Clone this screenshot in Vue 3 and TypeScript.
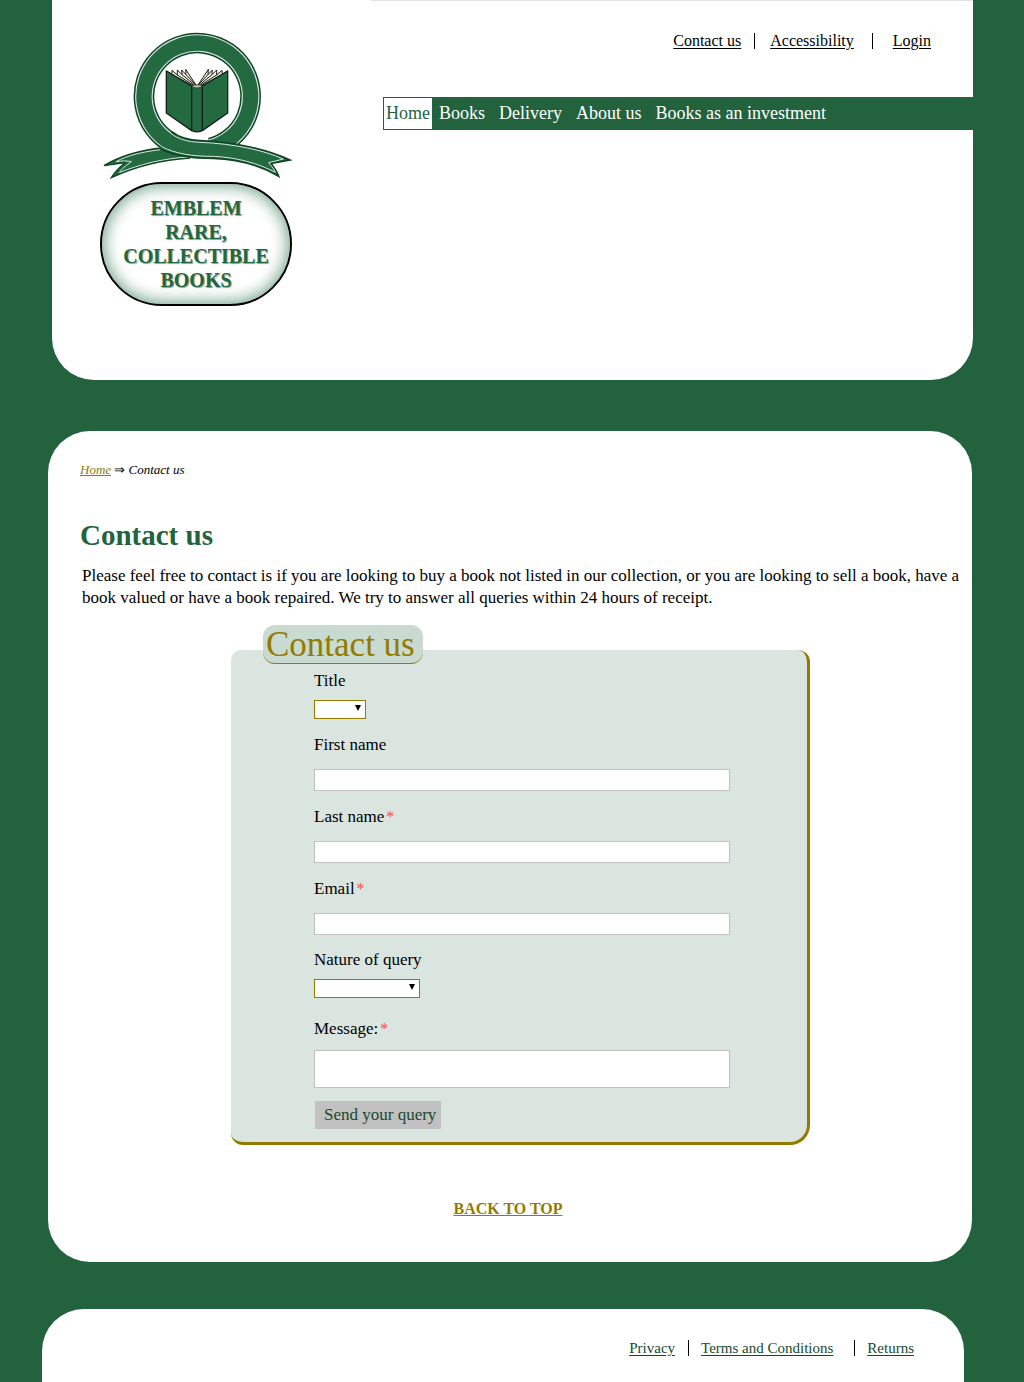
<script setup lang="ts">
import { ref } from 'vue'

interface NavLink {
  label: string
  current?: boolean
}

const topLinks: string[] = ['Contact us', 'Accessibility', 'Login']
const footerLinks: string[] = ['Privacy', 'Terms and Conditions', 'Returns']
const navLinks: NavLink[] = [
  { label: 'Home', current: true },
  { label: 'Books' },
  { label: 'Delivery' },
  { label: 'About us' },
  { label: 'Books as an investment' },
]

const title = ref('')
const firstName = ref('')
const lastName = ref('')
const email = ref('')
const nature = ref('')
const message = ref('')
</script>

<template>
  <div id="top" class="page">
    <header class="site-header">
      <a class="brand" href="#">
        <svg class="emblem" viewBox="30 30 576 450" aria-hidden="true">
          <!-- left tail -->
          <path class="ribbon" d="M214 384 C150 391 90 408 42 437 L106 428 C84 444 74 456 64 473 C130 442 210 420 300 414 Z" />
          <path class="ribbon-line" d="M212 389 C160 395 112 406 78 425 C96 422 112 422 124 425 C106 438 96 446 88 458 C150 433 220 415 296 411" />
          <!-- ribbon loop, open where the front band crosses it -->
          <g fill="none">
            <path d="M246 370 A160 160 0 1 1 362 384" stroke="#0f4526" stroke-width="62" />
            <path d="M246 370 A160 160 0 1 1 362 384" stroke="#d5e4da" stroke-width="53" />
            <path d="M246 370 A160 160 0 1 1 362 384" stroke="#236a40" stroke-width="46" />
          </g>
          <!-- front band running into the right tail -->
          <path class="band" d="M246 336 C270 354 295 361 330 362 C430 365 530 388 600 420 L543 430 C551 442 561 454 566 469 C510 436 440 417 370 415 C305 415 255 408 210 386 Z" />
          <path class="ribbon-edge" d="M245 335 C270 354 295 361 330 362 C430 365 530 388 600 420 L543 430 C551 442 561 454 566 469 C510 436 440 417 370 415 C305 415 255 408 211 386" />
          <path class="ribbon-line" d="M242 340 C266 358 295 366 330 367 C430 371 520 390 580 417 C566 421 550 424 536 428 C546 440 552 448 556 457 C505 430 440 412 370 409 C308 409 258 402 215 380" />
          <!-- open book -->
          <g stroke="#17211b" stroke-linejoin="round">
            <path d="M229 153 L245 163 L246 151 L262 165 L262 150 L276 164 L275 150 L288 164 L287 148 L318 195 L305 199 Z" fill="#efeddc" stroke-width="3" />
            <path d="M413 153 L397 163 L396 151 L380 165 L380 150 L366 164 L367 150 L354 164 L355 148 L324 195 L337 199 Z" fill="#efeddc" stroke-width="3" />
            <path d="M245 163 L308 197 M262 165 L311 196 M276 164 L314 195 M288 164 L316 193 M397 163 L334 197 M380 165 L331 196 M366 164 L328 195 M354 164 L326 193" fill="none" stroke-width="3" />
            <path d="M229 153 L305 198 V332 L229 279 Z M413 153 L337 198 V332 L413 279 Z" fill="#236a40" stroke-width="4" />
            <path d="M305 199 H337 V331 Q321 340 305 331 Z" fill="#236a40" stroke-width="4" />
            <ellipse cx="321" cy="199" rx="14" ry="5" fill="#b9b8a6" stroke-width="2" />
          </g>
        </svg>
        <span class="brand-name">EMBLEM<br />RARE,<br />COLLECTIBLE<br />BOOKS</span>
      </a>
      <div class="header-side">
        <ul class="top-links">
          <li v-for="link in topLinks" :key="link"><a href="#">{{ link }}</a></li>
        </ul>
        <nav class="main-nav" aria-label="Main">
          <a
            v-for="link in navLinks"
            :key="link.label"
            href="#"
            :class="{ current: link.current }"
          >{{ link.label }}</a>
        </nav>
      </div>
    </header>

    <main class="content">
      <p class="crumbs"><a href="#">Home</a> <span class="arrow">⇒</span> Contact us</p>
      <h1>Contact us</h1>
      <p class="intro">
        Please feel free to contact is if you are looking to buy a book not listed in our collection, or you are looking to sell a book, have a book valued or have a book repaired. We try to answer all queries within 24 hours of receipt.
      </p>

      <form class="panel" @submit.prevent>
        <h2>Contact us</h2>
        <div class="fields">
          <div class="field choice">
            <label for="title">Title</label>
            <span class="select short">
              <select id="title" v-model="title">
                <option value=""></option>
                <option>Mr</option>
                <option>Mrs</option>
                <option>Ms</option>
              </select>
            </span>
          </div>
          <div class="field">
            <label for="first-name">First name</label>
            <input id="first-name" v-model="firstName" type="text" />
          </div>
          <div class="field">
            <label for="last-name">Last name<span class="required">*</span></label>
            <input id="last-name" v-model="lastName" type="text" required />
          </div>
          <div class="field">
            <label for="email">Email<span class="required">*</span></label>
            <input id="email" v-model="email" type="email" required />
          </div>
          <div class="field choice">
            <label for="nature">Nature of query</label>
            <span class="select">
              <select id="nature" v-model="nature">
                <option value=""></option>
                <option>Buying</option>
                <option>Selling</option>
                <option>Repair</option>
              </select>
            </span>
          </div>
          <div class="field message">
            <label for="message">Message:<span class="required">*</span></label>
            <textarea id="message" v-model="message" required></textarea>
          </div>
          <button type="submit">Send your query</button>
        </div>
      </form>

      <p class="back"><a href="#top">BACK TO TOP</a></p>
    </main>

    <footer class="site-footer">
      <ul class="footer-links">
        <li v-for="link in footerLinks" :key="link"><a href="#">{{ link }}</a></li>
      </ul>
    </footer>
  </div>
</template>

<style>
html,
body {
  margin: 0;
  background: #22633d;
}
</style>

<style scoped>
.page {
  display: flex;
  flex-direction: column;
  min-height: 100vh;
  background: #22633d;
  color: #000;
  font-family: "Liberation Serif", "Times New Roman", serif;
}

.site-header {
  display: flex;
  align-items: flex-start;
  box-sizing: border-box;
  min-height: 380px;
  margin: 0 51px 0 52px;
  background: #fff;
  border-radius: 0 0 42px 42px;
}

.brand {
  display: flex;
  flex: none;
  flex-direction: column;
  gap: 2px;
  width: 192px;
  padding: 30px 79px 0 48px;
  text-decoration: none;
}

.emblem {
  display: block;
  width: 192px;
  height: 150px;
}

.ribbon {
  fill: #236a40;
  stroke: #0f4526;
  stroke-width: 4;
}

.band {
  fill: #236a40;
}

.ribbon-edge {
  fill: none;
  stroke: #0f4526;
  stroke-width: 5;
}

.ribbon-line {
  fill: none;
  stroke: #d5e4da;
  stroke-width: 3;
}

.brand-name {
  box-sizing: border-box;
  height: 124px;
  padding-top: 12px;
  border: 2px solid #000;
  border-radius: 62px;
  box-shadow: inset 0 0 16px 2px #6fa185;
  color: #22683f;
  font-size: 20px;
  font-weight: bold;
  line-height: 24px;
  text-align: center;
  text-shadow: 1px 1px 1px #8a9a90;
}

.header-side {
  flex: 1;
  border-top: 1px solid #e2e2e2;
}

.top-links,
.footer-links {
  display: flex;
  justify-content: flex-end;
  margin: 0;
  padding: 0;
  list-style: none;
}

.top-links {
  padding: 32px 42px 0 0;
  font-size: 16px;
  line-height: 16px;
}

.top-links li + li,
.footer-links li + li {
  margin-left: 13px;
  padding-left: 15px;
  border-left: 1px solid #000;
}

.top-links li:last-child {
  margin-left: 18px;
  padding-left: 20px;
}

.top-links a {
  color: #000;
  text-underline-offset: 2px;
}

.main-nav {
  display: flex;
  gap: 14px;
  margin: 48px 0 0 12px;
  border: 1px solid #22633d;
  border-right: 0;
  background: #22633d;
  font-size: 18px;
  line-height: 31px;
}

.main-nav a {
  color: #fff;
  text-decoration: none;
}

.main-nav a.current {
  margin-right: -7px;
  padding: 0 2px;
  background: #fff;
  color: #22633d;
}

.content {
  margin: 51px 52px 0 48px;
  padding: 31px 32px 43px;
  background: #fff;
  border-radius: 42px;
}

.crumbs {
  margin: 0;
  font-size: 13px;
  font-style: italic;
  line-height: 16px;
}

.arrow {
  font-style: normal;
}

.crumbs a,
.back a {
  color: #937b00;
}

h1 {
  margin: 41px 0 0;
  color: #22633d;
  font-size: 29px;
  line-height: 32px;
}

.intro {
  margin: 14px -24px 0 2px;
  font-size: 17px;
  line-height: 22px;
}

.panel {
  box-sizing: border-box;
  max-width: 579px;
  margin: 41px 0 0 151px;
  padding: 0 77px 13px 83px;
  background: #dbe5df;
  border-right: 3px solid #937b00;
  border-bottom: 3px solid #937b00;
  border-radius: 10px 12px 20px 12px;
}

h2 {
  display: inline-block;
  box-sizing: border-box;
  width: 160px;
  margin: -25px 0 0 -51px;
  padding: 2px 0 0 3px;
  border-bottom: 1px solid #937b00;
  border-radius: 12px;
  background: #c9dad1;
  color: #937b00;
  font-size: 35px;
  font-weight: normal;
  line-height: 36px;
  vertical-align: top;
}

.fields {
  display: flex;
  flex-direction: column;
  align-items: flex-start;
  gap: 16px;
  padding-top: 4px;
  font-size: 17px;
  line-height: 20px;
}

.field {
  display: flex;
  flex-direction: column;
  align-items: flex-start;
  gap: 14px;
  width: 100%;
}

.field.choice {
  gap: 9px;
  margin-top: -1px;
}

.field.message {
  gap: 11px;
  margin-top: 5px;
}

.required {
  margin-left: 2px;
  color: #ff4a3d;
  font-size: 16px;
}

input,
textarea {
  box-sizing: border-box;
  width: 100%;
  margin: 0;
  border: 1px solid #c2c2c2;
  border-radius: 0;
  background: #fff;
  font: inherit;
}

input {
  height: 22px;
}

textarea {
  height: 38px;
  resize: none;
}

.select {
  display: flex;
  position: relative;
  width: 106px;
}

.select.short {
  width: 52px;
}

.select::after {
  position: absolute;
  top: 5px;
  right: 5px;
  border: 3px solid transparent;
  border-top: 6px solid #000;
  border-bottom: 0;
  content: "";
  pointer-events: none;
}

select {
  width: 100%;
  height: 19px;
  margin: 0;
  border: 1px solid #937b00;
  border-radius: 0;
  background: #fff;
  appearance: none;
}

button {
  height: 28px;
  margin: -3px 0 0 1px;
  padding: 0 5px 0 9px;
  border: 0;
  background: #c1c1c1;
  color: #164a2b;
  font: inherit;
}

.back {
  margin: 54px 4px 0 0;
  font-size: 16px;
  font-weight: bold;
  line-height: 20px;
  text-align: center;
}

.site-footer {
  flex: 1;
  margin: 47px 60px 0 42px;
  padding: 31px 50px 24px;
  background: #fff;
  border-radius: 42px 42px 0 0;
}

.footer-links {
  font-size: 15px;
  line-height: 16px;
}

.footer-links li + li {
  padding-left: 12px;
}

.footer-links li:last-child {
  margin-left: 21px;
}

.footer-links a {
  color: #164a2b;
  text-underline-offset: 2px;
}
</style>
